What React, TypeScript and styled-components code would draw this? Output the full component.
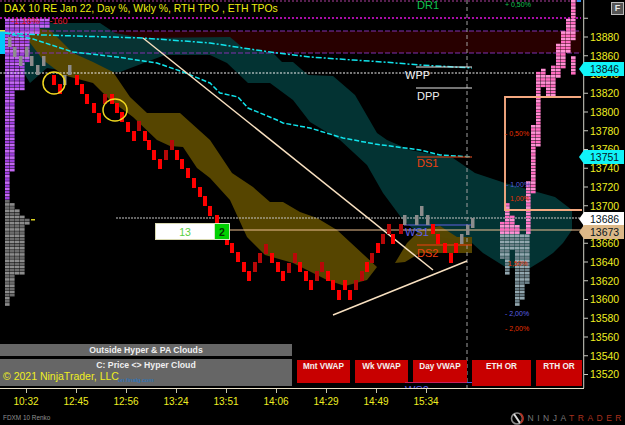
import React from "react";
import styled, { createGlobalStyle } from "styled-components";

const Global = createGlobalStyle`
  html, body { margin: 0; padding: 0; background: #000; }
  body { font-family: "Liberation Sans", Arial, sans-serif; }
  #root { width: 625px; height: 425px; overflow: hidden; }
`;

const Page = styled.div`
  width: 625px; height: 425px; background: #000; display: flex; flex-direction: column; overflow: hidden;
`;
const ChartRow = styled.div`display: flex; height: 388px; flex: none;`;
const Plot = styled.div`position: relative; width: 583px; height: 388px; flex: none; overflow: hidden;`;
const ChartSvg = styled.svg`display: block; width: 583px; height: 388px;`;
const Legend = styled.div`
  position: absolute; left: 4px; top: 2px; color: #eeee10; font-size: 10.4px; line-height: 13px; white-space: nowrap;
`;
const LegendStat = styled.div`
  position: absolute; left: 11px; top: 16px; color: #e01830; font-size: 9px; line-height: 10px; white-space: pre;
`;
const EntryBadge = styled.div`
  position: absolute; left: 155px; top: 223px; width: 75px; height: 17px; display: flex;
`;
const EntryCount = styled.div`
  flex: 1; background: #fff; border: 1px solid #d8d8b0; border-right: 0; color: #58d040; font-size: 10.5px;
  display: flex; align-items: center; justify-content: center;
`;
const EntryDelta = styled.div`
  width: 14px; background: #00d000; border: 1px solid #d0e8c0; color: #063006; font-size: 10.5px; font-weight: bold;
  display: flex; align-items: center; justify-content: center;
`;
const ButtonBar = styled.div`
  position: absolute; left: 0; bottom: 2px; width: 582px; display: flex; align-items: flex-end; gap: 5px;
`;
const StatusStack = styled.div`width: 292px; display: flex; flex-direction: column; gap: 3px; flex: none;`;
const StatusBar = styled.div`
  position: relative; background: #666; color: #f0f0f0; font-size: 8.7px; font-weight: bold; text-align: center;
  line-height: 11px; height: ${(p: { $h: number }) => p.$h}px; box-sizing: border-box; padding-top: 1px;
`;
const Copyright = styled.div`
  position: absolute; left: 3px; top: 11px; font-size: 10.5px; font-weight: normal; line-height: 13px; color: #eeee20; white-space: nowrap;
`;
const WebMark = styled.div`
  position: absolute; left: 118px; top: 17px; font-size: 6px; font-weight: normal; line-height: 8px; color: #1b78c8; white-space: nowrap;
`;
const RedButton = styled.div<{ $w: number; $short?: boolean }>`
  width: ${(p) => p.$w}px; height: ${(p) => (p.$short ? 23 : 26)}px; ${(p) => (p.$short ? "margin-bottom: 3px;" : "")}
  flex: none; background: #c80000; color: #f4f0f0; font-size: 8.2px; font-weight: bold; text-align: center; line-height: 11px; padding-top: 1px; box-sizing: border-box;
`;
const VwapLine = styled.div`
  position: absolute; left: 405px; top: 382px; width: 67px; height: 1px;
  background: linear-gradient(90deg, #c8205c 0 92%, #4a60e0 92% 100%);
`;
const AxisColumn = styled.div`position: relative; width: 42px; height: 388px; flex: none;`;
const AxisSvg = styled.svg`display: block; width: 42px; height: 388px;`;
const Flag = styled.div<{ $bg: string; $y: number }>`
  position: absolute; left: -4px; top: ${(p) => p.$y}px; width: 45px; height: 14px; background: ${(p) => p.$bg};
  clip-path: polygon(0 50%, 5px 0, 100% 0, 100% 100%, 5px 100%);
  color: #06141c; font-size: 10.5px; line-height: 14px; padding-left: 11px; box-sizing: border-box;
`;
const FButton = styled.div`
  position: absolute; right: 1px; top: 2px; width: 13px; height: 13px; box-sizing: border-box; background: #555;
  border: 1px solid #bbb; color: #e8e8e8; font-size: 9px; line-height: 11px; text-align: center; font-weight: bold;
`;
const TimeAxis = styled.div`
  height: 22px; flex: none; width: 583px; border-top: 1px solid #e8e0c8; display: flex; padding-left: 1px; box-sizing: content-box;
`;
const TimeCell = styled.div`width: 50px; display: flex; flex-direction: column; align-items: center; flex: none;`;
const Tick = styled.div`width: 1px; height: 4px; background: #c8c8b0;`;
const TimeLabel = styled.div`margin-top: 3px; font-size: 10px; line-height: 12px; color: #eeee20;`;
const Footer = styled.div`
  flex: 1; display: flex; align-items: center; justify-content: space-between; padding: 0 0 0 3px;
`;
const Instrument = styled.div`font-size: 6.4px; color: #909090; line-height: 10px;`;
const Logo = styled.div`display: flex; align-items: center; gap: 3px;`;
const LogoWord = styled.div`font-size: 8.5px; letter-spacing: 3.5px; color: #777; line-height: 10px; white-space: nowrap;`;
const LogoAccent = styled.span`color: #a8301e;`;

const PITCH = 3.125;
type Cell = [number, number, number, number];
const cells = (cols: Cell[], a: string, b: string, key: string) =>
  cols.flatMap(([x, w, y1, y2]) => {
    const out: React.ReactElement[] = [];
    for (let k = Math.ceil(y1 / PITCH); k * PITCH < y2; k++) {
      out.push(
        <rect key={`${key}${x}-${k}`} x={x} y={k * PITCH} width={w} height={2.7} fill={k % 2 ? a : b} />
      );
    }
    return out;
  });

const pinkCols: Cell[] = [
  [500, 4.6, 219, 232], [505, 4.6, 203, 232], [510, 4.6, 215, 232], [515, 4.6, 223, 232], [526, 4.6, 180, 232],
  [531, 4.6, 122, 192], [536, 4.6, 70, 146], [541, 4.6, 66, 87], [546, 4.6, 72, 95], [551, 4.6, 63, 96],
  [556, 4.6, 43, 78], [561, 4.6, 30, 68], [566, 4.6, 17, 53], [571, 4.6, 0, 40], [571, 4.6, 55, 74],
];
const slateCols: Cell[] = [
  [500, 4.6, 233, 257], [505, 4.6, 233, 272], [510, 4.6, 233, 250], [515, 4.6, 233, 305], [520, 4.6, 233, 297], [525, 4.6, 233, 283],
  [510, 4.6, 260, 262],
];
const purpleRows: [number, number, number][] = [
  [16, 26, 45], [26, 32, 35], [32, 60, 25], [60, 90, 20], [90, 140, 10], [140, 171, 10], [171, 197, 5],
];
const purpleCols: Cell[] = purpleRows.flatMap(([y1, y2, w]) => {
  const r: Cell[] = [];
  for (let x = 5; x < 5 + w; x += 5) r.push([x, 4.6, y1, y2]);
  return r;
});
const grayRows: [number, number, number][] = [
  [197, 203, 5], [203, 209, 10], [209, 215, 15], [215, 218, 20], [218, 224, 25], [224, 247, 20], [247, 250, 25],
  [250, 272, 20], [272, 275, 15], [275, 296, 10], [296, 305, 5],
];
const grayCols: Cell[] = grayRows.flatMap(([y1, y2, w]) => {
  const r: Cell[] = [];
  for (let x = 5; x < 5 + w; x += 5) r.push([x, 4.6, y1, y2]);
  return r;
});

const redBricks: [number, number, number?][] = [
  [52, 75], [58, 84], [75, 75], [80, 84], [85, 94], [92, 103], [97, 113], [103, 94, 1], [110, 94], [115, 103], [120, 112],
  [126, 122], [137, 121, 1], [132, 131], [143, 131], [147, 140], [152, 150], [158, 159], [164, 150, 1], [170, 140, 1], [175, 150],
  [180, 159], [186, 168], [192, 178], [198, 187], [203, 196], [208, 206], [215, 215], [225, 235], [230, 243], [236, 252],
  [242, 262], [247, 271], [253, 262, 1], [258, 253, 1], [264, 244, 1], [270, 253], [276, 262], [281, 271], [287, 263, 1],
  [293, 253, 1], [298, 262], [304, 271], [309, 280], [315, 271, 1], [320, 262, 1], [326, 271], [331, 280], [337, 290],
  [343, 280], [348, 290], [354, 280, 1], [360, 271, 1], [365, 262], [370, 253, 1], [376, 243], [381, 234, 1], [387, 224, 1],
  [391, 234], [399, 224, 1], [431, 224], [436, 234], [443, 243], [449, 253], [454, 243],
];
const grayBricks: [number, number][] = [
  [8, 37], [13, 47], [19, 56], [25, 47], [30, 56], [36, 65], [42, 56], [68, 65], [63, 75], [403, 215], [415, 215], [420, 206],
  [426, 215], [460, 234], [466, 225], [471, 218],
];

const toPoints = (p: number[][]) => p.map((q) => q.join(",")).join(" ");
const teal = [[30,23],[100,23],[115,33],[143,38],[230,37],[243,48],[273,53],[282,62],[293,62],[308,75],[333,76],[355,95],[377,133],[387,140],[410,150],[453,158],[475,173],[505,183],[555,197],[572,210],[572,230],[563,243],[553,253],[543,260],[530,268],[507,268],[483,253],[472,243],[440,237],[420,235],[403,220],[383,193],[367,165],[340,140],[310,122],[293,100],[270,83],[248,83],[227,63],[210,55],[165,55],[120,72],[60,70],[47,68],[30,83],[22,70],[28,40]];
const olive = [[30,28],[50,30],[73,53],[93,62],[113,72],[130,97],[147,113],[180,113],[210,140],[232,173],[253,187],[270,202],[283,202],[300,212],[317,218],[337,230],[377,267],[367,280],[345,286],[327,280],[293,263],[265,255],[247,237],[230,200],[210,178],[197,168],[183,147],[170,146],[157,140],[133,117],[110,100],[93,83],[63,75],[43,60],[28,40]];
const olive2 = [[395,263],[407,243],[420,230],[440,226],[457,237],[472,237],[472,253],[420,253],[405,262]];
const cyanA = [[5,33],[43,35],[143,38],[210,43],[243,48],[277,53],[310,57],[353,60],[383,62],[420,65],[472,68]];
const cyanB = [[5,33],[33,39],[73,52],[117,57],[157,63],[183,72],[210,83],[220,93],[238,97],[248,108],[277,120],[283,123],[310,128],[343,138],[375,144],[420,150],[440,155],[472,157]];

const prices = Array.from({ length: 20 }, (_, i) => 13900 - i * 20);
const priceY = (p: number) => 37 + (13880 - p) * 0.9375;
const times = ["10:32", "12:45", "12:56", "13:24", "13:51", "14:06", "14:29", "14:49", "15:34"];

const ChartDrawing = () => (
  <ChartSvg viewBox="0 0 583 388">
    <rect x={0} y={31} width={581} height={22} fill="#280000" />
    <polygon points={toPoints(teal)} fill="#033a3a" opacity={0.88} />
    <polygon points={toPoints(olive)} fill="#5a4800" opacity={0.96} />
    <polygon points={toPoints(olive2)} fill="#5a4800" opacity={0.96} />
    <line x1={0} x2={581} y1={1} y2={1} stroke="#b040a0" strokeDasharray="2 2" />
    <line x1={0} x2={581} y1={18} y2={18} stroke="#e010e0" strokeWidth={1.5} strokeDasharray="2 2" />
    <line x1={0} x2={581} y1={31} y2={31} stroke="#8030b0" strokeDasharray="5 2" />
    <line x1={0} x2={581} y1={53} y2={53} stroke="#8030b0" strokeDasharray="5 2" />
    {cells(purpleCols, "#a040e0", "#c468f4", "pu")}
    {cells(grayCols, "#8c8c8c", "#6c6c6c", "gy")}
    <rect x={31} y={219} width={4} height={1.5} fill="#d8d020" />
    <rect x={0} y={31} width={5} height={23} fill="#00c8f8" />
    <rect x={0} y={30} width={5} height={1.5} fill="#e8e040" />
    <line x1={0} x2={535} y1={73} y2={73} stroke="#f4f4f4" strokeWidth={1.2} strokeDasharray="2 1.5" />
    <line x1={116} x2={581} y1={218} y2={218} stroke="#c8c8c8" strokeDasharray="2 1" />
    <line x1={220} x2={583} y1={230} y2={230} stroke="#eec090" />
    <line x1={467} x2={467} y1={0} y2={388} stroke="#a0a0a0" strokeDasharray="4 3" />
    <polyline points={toPoints(cyanA)} fill="none" stroke="#10e4ec" strokeWidth={1.5} strokeDasharray="6 2 2 2" />
    <polyline points={toPoints(cyanB)} fill="none" stroke="#10e4ec" strokeWidth={1.5} strokeDasharray="5 2" />
    <line x1={416} x2={472} y1={67} y2={67} stroke="#e8e8e8" />
    <line x1={416} x2={472} y1={88} y2={88} stroke="#e8e8e8" />
    <line x1={417} x2={472} y1={157} y2={157} stroke="#f04010" />
    <line x1={404} x2={472} y1={225} y2={225} stroke="#6060e0" />
    <line x1={417} x2={472} y1={245} y2={245} stroke="#f04010" />
    <line x1={143} y1={38} x2={433} y2={270} stroke="#f8e0c0" strokeWidth={1.5} />
    <line x1={333} y1={315} x2={467} y2={261} stroke="#f8e0c0" strokeWidth={1.5} />
    {redBricks.map(([x, y, dim]) => (
      <rect key={`r${x}`} x={x} y={y} width={4} height={10} fill={dim ? "#b80808" : "#ff0000"} />
    ))}
    {grayBricks.map(([x, y]) => (
      <rect key={`g${x}`} x={x} y={y} width={3.5} height={10} fill="#8c8c8c" />
    ))}
    <ellipse cx={54} cy={83} rx={11} ry={11} fill="none" stroke="#f0d820" strokeWidth={1.5} />
    <ellipse cx={115} cy={110} rx={12} ry={11} fill="none" stroke="#f0d820" strokeWidth={1.5} />
    {cells(slateCols, "#93a8b0", "#6c8088", "sl")}
    {cells(pinkCols, "#ff6cc0", "#ff90d4", "pk")}
    <rect x={577} y={0} width={4} height={2} fill="#3090f0" />
    <polyline points="581,97 505,97 505,210 582,210" fill="none" stroke="#f4a880" strokeWidth={1.9} />
    <g fontFamily="'Liberation Sans', Arial, sans-serif" fontSize={11}>
      <text x={417} y={9} fill="#10c050">DR1</text>
      <text x={405} y={79} fill="#f0f0f0">WPP</text>
      <text x={417} y={100} fill="#f0f0f0">DPP</text>
      <text x={417} y={167} fill="#f04010">DS1</text>
      <text x={405} y={236} fill="#6060e8">WS1</text>
      <text x={417} y={257} fill="#f04010">DS2</text>
      <text x={405} y={394} fill="#6060e8">WS2</text>
    </g>
    <g fontFamily="'Liberation Sans', Arial, sans-serif" fontSize={7}>
      <text x={505} y={7} fill="#10c050">+ 0,50%</text>
      <text x={505} y={136} fill="#e83000">- 0,50%</text>
      <text x={506} y={187} fill="#5060e0">- 1,00%</text>
      <text x={510} y={201} fill="#e83000">1,00%</text>
      <text x={508} y={266} fill="#e83000">1,50%</text>
      <text x={505} y={316} fill="#5a60e8">- 2,00%</text>
      <text x={505} y={331} fill="#e83000">- 2,00%</text>
    </g>
  </ChartSvg>
);

const PriceScale = () => (
  <AxisSvg viewBox="0 0 42 388">
    <line x1={0.5} x2={0.5} y1={0} y2={388} stroke="#a8a8a0" strokeWidth={1.5} />
    {prices.map((p) => {
      const y = priceY(p);
      return (
        <g key={p}>
          <line x1={1} x2={5} y1={y} y2={y} stroke="#c8c8c0" />
          {p !== 13900 && p !== 13680 && (
            <text x={7} y={y + 3.8} fill="#eeee20" fontSize={10.5} fontFamily="'Liberation Sans', Arial, sans-serif">
              {p}
            </text>
          )}
        </g>
      );
    })}
  </AxisSvg>
);

export default function App() {
  return (
    <Page>
      <Global />
      <ChartRow>
        <Plot>
          <ChartDrawing />
          <Legend>DAX 10 RE Jan 22, Day %, Wkly %, RTH TPO , ETH TPOs</Legend>
          <LegendStat>{"-1.16%    -160"}</LegendStat>
          <EntryBadge>
            <EntryCount>13</EntryCount>
            <EntryDelta>2</EntryDelta>
          </EntryBadge>
          <ButtonBar>
            <StatusStack>
              <StatusBar $h={12}>Outside Hyper &amp; PA Clouds</StatusBar>
              <StatusBar $h={27}>
                C: Price &lt;&gt; Hyper Cloud
                <Copyright>© 2021 NinjaTrader, LLC</Copyright>
                <WebMark>on.finalg.com</WebMark>
              </StatusBar>
            </StatusStack>
            <RedButton $w={53} $short>Mnt VWAP</RedButton>
            <RedButton $w={53} $short>Wk VWAP</RedButton>
            <RedButton $w={54} $short>Day VWAP</RedButton>
            <RedButton $w={59}>ETH OR</RedButton>
            <RedButton $w={46}>RTH OR</RedButton>
          </ButtonBar>
          <VwapLine />
        </Plot>
        <AxisColumn>
          <PriceScale />
          <FButton>F</FButton>
          <Flag $bg="#10f4f8" $y={62}>13846</Flag>
          <Flag $bg="#10f4f8" $y={150}>13751</Flag>
          <Flag $bg="#ffffff" $y={212}>13686</Flag>
          <Flag $bg="#dcb888" $y={225}>13673</Flag>
        </AxisColumn>
      </ChartRow>
      <TimeAxis>
        {times.map((t) => (
          <TimeCell key={t}>
            <Tick />
            <TimeLabel>{t}</TimeLabel>
          </TimeCell>
        ))}
      </TimeAxis>
      <Footer>
        <Instrument>FDXM 10 Renko</Instrument>
        <Logo>
          <svg width="15" height="13" viewBox="0 0 15 13">
            <circle cx="7" cy="6.5" r="5.5" fill="none" stroke="#8a8a8a" strokeWidth="1.6" />
            <path d="M4 2 L10 11" stroke="#d8d8d8" strokeWidth="2" />
            <path d="M10 1.5 A5.5 5.5 0 0 1 10.5 11" fill="none" stroke="#b03020" strokeWidth="1.8" />
          </svg>
          <LogoWord>NINJA<LogoAccent>TRADER</LogoAccent></LogoWord>
        </Logo>
      </Footer>
    </Page>
  );
}
